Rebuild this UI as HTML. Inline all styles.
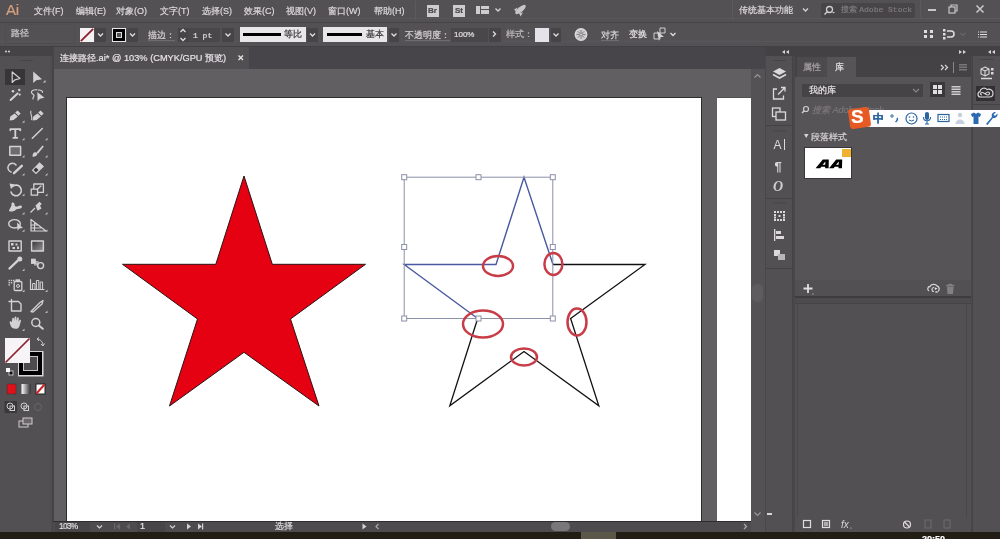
<!DOCTYPE html>
<html><head><meta charset="utf-8">
<style>
*{margin:0;padding:0;box-sizing:border-box}
html,body{width:1000px;height:539px;overflow:hidden;background:#535053;font-family:"Liberation Sans",sans-serif;color:#e6e3e6}
.a{position:absolute}
.t{position:absolute;white-space:nowrap;font-size:9px;line-height:11px;color:#dcd9dc;will-change:transform;-webkit-text-stroke:0.2px currentColor}
svg.i{position:absolute;overflow:visible;will-change:transform}
.dk{position:absolute;background:#474447}
.ul{border-bottom:1px solid #6e6b6e}
</style></head><body>
<!-- ========== MENU BAR ========== -->
<div class="a" style="left:0;top:0;width:1000px;height:22px;background:#545154"></div>
<div class="a" style="left:0;top:18px;width:1000px;height:1px;background:#5a575a"></div>
<div class="a" style="left:0;top:22px;width:1000px;height:1px;background:#464346"></div>
<div class="t" style="left:6px;top:2px;font-size:15px;line-height:15px;color:#cfa486;letter-spacing:-0.2px;text-shadow:0 0 1px #6a4030">Ai</div>
<div class="t" style="left:34px;top:6px">文件(F)</div>
<div class="t" style="left:76px;top:6px">编辑(E)</div>
<div class="t" style="left:116px;top:6px">对象(O)</div>
<div class="t" style="left:160px;top:6px">文字(T)</div>
<div class="t" style="left:202px;top:6px">选择(S)</div>
<div class="t" style="left:244px;top:6px">效果(C)</div>
<div class="t" style="left:286px;top:6px">视图(V)</div>
<div class="t" style="left:328px;top:6px">窗口(W)</div>
<div class="t" style="left:374px;top:6px">帮助(H)</div>
<div class="a" style="left:415px;top:1px;width:1px;height:19px;background:#5e5b5e"></div>
<div class="a" style="left:427px;top:5px;width:12px;height:12px;background:#cfcccf"></div>
<div class="t" style="left:428px;top:5px;font-size:8px;color:#4a474a;font-weight:bold">Br</div>
<div class="a" style="left:453px;top:5px;width:12px;height:12px;background:#cfcccf"></div>
<div class="t" style="left:455px;top:5px;font-size:8px;color:#4a474a;font-weight:bold">St</div>
<div class="a" style="left:476px;top:6px;width:4px;height:8px;background:#cfcccf"></div>
<div class="a" style="left:481px;top:6px;width:8px;height:3px;background:#cfcccf"></div>
<div class="a" style="left:481px;top:10px;width:8px;height:4px;background:#cfcccf"></div>
<svg class="i" style="left:0;top:0" width="1000" height="22">
<path d="M495.5 8.5 L498 11 L500.5 8.5" stroke="#d6d3d6" stroke-width="1.3" fill="none"/>
<g fill="#c8c5c8"><ellipse cx="520.5" cy="9.5" rx="6.5" ry="2.6" transform="rotate(-40 520.5 9.5)"/><path d="M514 9.5 L517.5 7.5 L516 11.5 Z M519 13 L520.5 16.5 L523 12.5 Z"/></g>
<path d="M803 8.5 L805.5 11 L808 8.5" stroke="#d6d3d6" stroke-width="1.3" fill="none"/>
</svg>
<div class="a" style="left:732px;top:1px;width:1px;height:19px;background:#5e5b5e"></div>
<div class="t" style="left:739px;top:5px;width:53px">传统基本功能</div>
<div class="a" style="left:821px;top:3px;width:94px;height:15px;background:#484548;border-radius:2px"></div>
<svg class="i" style="left:0;top:0" width="1000" height="22">
<circle cx="829.5" cy="9.5" r="3" stroke="#d0cdd0" stroke-width="1.3" fill="none"/>
<path d="M827.5 11.5 L824.5 14.5" stroke="#d0cdd0" stroke-width="1.5"/>
<path d="M832 12 L835 12 L833.5 13.5Z" fill="#d0cdd0"/>
<path d="M928 10 H936" stroke="#c8c5c8" stroke-width="2"/>
<rect x="949" y="7" width="6" height="6" stroke="#c8c5c8" stroke-width="1.2" fill="none"/>
<path d="M951 7 V5 H957 V11 H955" stroke="#c8c5c8" stroke-width="1.2" fill="none"/>
<path d="M976.5 5.5 L983.5 12.5 M983.5 5.5 L976.5 12.5" stroke="#c8c5c8" stroke-width="1.6"/>
</svg>
<div class="t" style="left:841px;top:4px;color:#7e7b7e;font-size:8px">搜索 <span style="font-family:'Liberation Mono',monospace;font-size:8px">Adobe Stock</span></div>
<div class="a" style="left:920px;top:0;width:1px;height:18px;background:#5c595c"></div>
<div class="a" style="left:920px;top:18px;width:80px;height:1px;background:#5c595c"></div>

<!-- ========== CONTROL BAR ========== -->
<div class="a" style="left:0;top:23px;width:1000px;height:23px;background:#545154"></div>
<div class="a" style="left:0;top:41px;width:1000px;height:1px;background:#59565a"></div>
<div class="a" style="left:0;top:46px;width:1000px;height:1px;background:#434043"></div>
<div class="a" style="left:5px;top:24px;width:70px;height:20px;border:1px solid #504d50"></div>
<div class="t" style="left:11px;top:28px;color:#cfcccf">路径</div>
<!-- fill swatch -->
<div class="a" style="left:80px;top:28px;width:14px;height:14px;background:#f4f2f4;overflow:hidden"></div>
<svg class="i" style="left:0;top:0" width="1000" height="50">
<path d="M80.8 41.2 L93.2 28.8" stroke="#8c1c2a" stroke-width="1.8"/>
</svg>
<div class="dk" style="left:95px;top:28px;width:11px;height:14px"></div>
<div class="a" style="left:112px;top:28px;width:14px;height:14px;background:#000;border:1px solid #e8e5e8"></div>
<div class="a" style="left:116px;top:32px;width:6px;height:6px;background:#555;border:1px solid #ddd"></div>
<div class="dk" style="left:127px;top:28px;width:11px;height:14px"></div>
<div class="t ul" style="left:148px;top:29px;color:#d6d3d6;line-height:11px;padding-top:1px;height:12px">描边：</div>
<div class="dk" style="left:178px;top:28px;width:10px;height:14px"></div>
<div class="dk" style="left:188px;top:28px;width:32px;height:14px;background:#4a474a"></div>
<div class="t" style="left:193px;top:30px;font-family:'Liberation Mono',monospace;font-size:8px;color:#e0dde0">1 pt</div>
<div class="dk" style="left:222px;top:28px;width:12px;height:14px"></div>
<div class="a" style="left:240px;top:27px;width:66px;height:15px;background:#e9e6e9"></div>
<div class="a" style="left:243px;top:33px;width:38px;height:2.5px;background:#000"></div>
<div class="t" style="left:284px;top:29px;color:#333">等比</div>
<div class="dk" style="left:307px;top:28px;width:11px;height:14px"></div>
<div class="a" style="left:323px;top:27px;width:64px;height:15px;background:#e9e6e9"></div>
<div class="a" style="left:327px;top:33px;width:35px;height:2.5px;background:#000"></div>
<div class="t" style="left:366px;top:29px;color:#333">基本</div>
<div class="dk" style="left:389px;top:28px;width:10px;height:14px"></div>
<div class="t ul" style="left:405px;top:29px;color:#d6d3d6;padding-top:1px;height:12px">不透明度：</div>
<div class="dk" style="left:451px;top:28px;width:37px;height:14px;background:#4a474a"></div>
<div class="t" style="left:454px;top:29px;color:#e0dde0;font-size:8px">100%</div>
<div class="dk" style="left:489px;top:28px;width:12px;height:14px"></div>
<div class="t" style="left:506px;top:29px;color:#bebbbe">样式：</div>
<div class="a" style="left:535px;top:28px;width:14px;height:14px;background:#e6e2ea"></div>
<div class="dk" style="left:551px;top:28px;width:10px;height:14px"></div>
<div class="t ul" style="left:601px;top:29px;color:#d6d3d6;padding-top:1px;height:12px">对齐</div>
<div class="t" style="left:629px;top:29px;color:#e6e3e6">变换</div>
<svg class="i" style="left:0;top:0" width="1000" height="50">
<g stroke="#e0dde0" stroke-width="1.3" fill="none">
<path d="M98 33.5 L100.5 36 L103 33.5"/>
<path d="M130 33.5 L132.5 36 L135 33.5"/>
<path d="M180.5 32 L183 29.5 L185.5 32 M180.5 38 L183 40.5 L185.5 38"/>
<path d="M225.5 33.5 L228 36 L230.5 33.5"/>
<path d="M310 33.5 L312.5 36 L315 33.5"/>
<path d="M391.5 33.5 L394 36 L396.5 33.5"/>
<path d="M493 31.5 L495.5 34 L493 36.5"/>
<path d="M553.5 33.5 L556 36 L558.5 33.5"/>
<path d="M670.5 33 L673 35.5 L675.5 33"/>
<circle cx="581" cy="34.5" r="5.8" fill="#cfcccf" stroke="#dcd9dc"/>
<g stroke="#7a777a" stroke-width=".9"><circle cx="581" cy="34.5" r="1.6"/>
<path d="M581 30 V32.5 M581 36.5 V39 M576.5 34.5 H579 M583 34.5 H585.5 M577.8 31.3 L579.6 33.1 M582.4 35.9 L584.2 37.7 M584.2 31.3 L582.4 33.1 M579.6 35.9 L577.8 37.7"/></g>
</g>
<path d="M654 33 H660 V39 H654Z M660 28 H665 V33 H660Z" stroke="#d0cdd0" stroke-width="1" fill="none"/>
<path d="M657 31 L664 37 L660 37 L659 41Z" fill="#d8d5d8"/>
<g fill="#e0dde0">
<rect x="924" y="30" width="3" height="3"/><rect x="930" y="30" width="3" height="3"/>
<rect x="924" y="35" width="3" height="3"/><rect x="930" y="35" width="3" height="3"/>
<rect x="943" y="29" width="2.5" height="2.5"/><rect x="943" y="33" width="2.5" height="2.5"/><rect x="943" y="37" width="2.5" height="2.5"/>
</g>
<path d="M947 31 H951 A3 3 0 0 1 951 37 H947" stroke="#e0dde0" stroke-width="1.5" fill="none"/>
<path d="M960.5 33 L963 35.5 L965.5 33" stroke="#6a676a" stroke-width="1.2" fill="none"/>
<g stroke="#e0dde0" stroke-width="1"><path d="M980 32 H987 M980 34.5 H987 M980 37 H987"/></g>
<g fill="#e0dde0"><rect x="978" y="31.5" width="1" height="1"/><rect x="978" y="34" width="1" height="1"/><rect x="978" y="36.5" width="1" height="1"/></g>
</svg>
<!-- ========== TOOLBAR ========== -->
<div class="a" style="left:0;top:47px;width:52px;height:485px;background:#535053"></div>
<div class="a" style="left:0;top:47px;width:52px;height:9px;background:#464346"></div>
<div class="a" style="left:50px;top:56px;width:2px;height:476px;background:#504d50"></div>
<div class="a" style="left:5px;top:69px;width:20px;height:16px;background:#383538"></div>
<svg class="i" style="left:0;top:0" width="60" height="540">
<g fill="#d8d5d8"><circle cx="6" cy="51.5" r="1"/><circle cx="9" cy="51.5" r="1"/></g>
<path d="M20 60.5 H33" stroke="#484548" stroke-width="1"/>
<g stroke="#d4d1d4" stroke-width="1.2" fill="none" stroke-linejoin="round" stroke-linecap="round">
<!-- r1 selection (outline) -->
<path d="M12.2 72 L12.2 82.5 L15 79.8 L20 78.5 Z"/>
<!-- r2 magic wand -->
<path d="M10.6 100 L17.6 93.4" stroke-width="2"/>
<!-- r2 lasso -->
<path d="M37 89.8 C33 89.5 31 91 31.5 92.5 C32 94 34 94.5 34 95.5 C34 96.8 32.5 97.5 33 99"/>
<path d="M38.5 90 C41 90.3 43 91 42.5 92.3"/>
<!-- r4 T -->
<path d="M10.3 130.3 V129.2 H20.3 V130.3 M15.3 129.2 V137.8 M13.3 137.8 H17.3" stroke-width="1.8"/>
<!-- r4 line -->
<path d="M32.3 138.2 L42.3 128.5" stroke-width="1.5"/>
<!-- r5 rect -->
<rect x="9.8" y="146.5" width="10.8" height="8.8" stroke-width="1.5" fill="#6e6b6e"/>
<!-- r6 shaper -->
<path d="M16 165 A4.5 4.5 0 1 0 11 172" stroke-width="1.5"/>
<path d="M14 173.2 L21.8 165.8" stroke-width="2.4"/>
<!-- r7 rotate -->
<path d="M12.5 186.5 A5.3 5.3 0 1 1 11 192" stroke-width="1.6"/>
<!-- r7 scale -->
<rect x="33.8" y="184" width="9.6" height="8.4" stroke-width="1.3"/>
<rect x="31.2" y="189.2" width="6.4" height="6" stroke-width="1.3" fill="#535053"/>
<path d="M37 189.5 L41 186" stroke-width="1.2"/>
<!-- r9 shape builder -->
<ellipse cx="14.5" cy="223.8" rx="5.8" ry="4.2" stroke-width="1.4"/>
<!-- r9 perspective -->
<path d="M31 219.5 V231 H46 Z M31 225 H37 M31 228 H42 M34.5 222 V231" stroke-width="1.2"/>
<!-- r10 mesh -->
<rect x="9" y="241" width="12.2" height="10" stroke-width="1.4"/>
<!-- r10 gradient -->
<rect x="31.6" y="241" width="11.8" height="10" stroke-width="1.4" fill="url(#gtool)"/>
<!-- r11 eyedropper -->
<path d="M9.5 268.5 L17.5 260.8" stroke-width="2.4"/>
<!-- r11 blend -->
<circle cx="40.6" cy="265.6" r="3" stroke-width="1.4"/>
<!-- r12 sprayer -->
<rect x="14.2" y="281.5" width="7.6" height="9" rx="1" stroke-width="1.3"/>
<circle cx="18" cy="286" r="1.5" stroke-width="1"/>
<!-- r12 graph -->
<path d="M30.5 279.5 V289.5 H44" stroke-width="1.2"/>
<rect x="33" y="283.5" width="2" height="6" stroke-width="1"/>
<rect x="36.8" y="280.5" width="2" height="9" stroke-width="1"/>
<rect x="40.6" y="282" width="2" height="7.5" stroke-width="1"/>
<!-- r13 artboard -->
<path d="M11.5 299.5 V311 H21 V304 L18.5 301.5 H9" stroke-width="1.4"/>
<!-- r13 slice -->
<path d="M31 311.5 L40 302.5 L43 300.5 L42 304 L33 312 Z" stroke-width="1.3"/>
<!-- r14 zoom -->
<circle cx="35.8" cy="322.5" r="4" stroke-width="1.5"/>
<path d="M38.8 325.5 L42.8 328.8" stroke-width="2"/>
</g>
<defs><linearGradient id="gtool" x1="0" x2="1" y1="0" y2="1"><stop offset="0" stop-color="#333"/><stop offset="1" stop-color="#999"/></linearGradient></defs>
<g fill="#d4d1d4">
<!-- r1 direct selection -->
<path d="M33.2 71.5 L33.2 83 L36.3 80.2 L42 79.2 Z"/>
<path d="M43 82.5 L45.5 82.5 L45.5 80 Z"/>
<!-- wand sparkles -->
<circle cx="13" cy="91.3" r="1.3"/><circle cx="19.3" cy="90" r="1.2"/><circle cx="19.7" cy="94.6" r="1.1"/>
<!-- lasso arrow -->
<path d="M37.3 92 L37.6 101.3 L40 98.8 L44.5 97.8 Z"/>
<!-- pen nibs -->
<path d="M9.6 120.6 L10.3 116.6 L14.6 113.4 L17.8 116.6 L13.6 120 Z"/>
<path d="M15.2 112.6 L17.6 110.4 L20.6 113.4 L18.4 115.8 Z"/>
<path d="M32.6 120.6 L33.3 116.6 L37.6 113.4 L40.8 116.6 L36.6 120 Z"/>
<path d="M38.2 112.6 L40.6 110.4 L43.6 113.4 L41.4 115.8 Z"/>
<path d="M31 110.8 C29.5 113.5 32.8 115.5 31.6 120.2" stroke="#d4d1d4" stroke-width="1.1" fill="none"/>
<!-- brush -->
<path d="M36.5 152.5 L42.5 145.5 L43.8 146.5 L38 153.8 Z"/>
<path d="M32.5 156.8 C32.3 154 34 151.5 36.3 152.5 L37.5 153.8 C37 156 35 157 32.5 156.8Z"/>
<!-- eraser -->
<path d="M31.8 170.2 L39.5 162.2 L44 166.5 L36 174.2 Z"/>
<!-- warp -->
<path d="M9 211 C9.5 208 12 206.5 11.5 204 C11 202.5 13 202 14 203 C15 204 14 206 16 206.5 C18 207 19 205 21 205.5 C22.5 206 22 208 20.5 208.5 C18.5 209 17 208.5 15.5 210 C14 211.5 11 212 9 211 Z"/>
<!-- pin -->
<path d="M35.5 205.5 L39.5 201.8 L41.8 204 L40 205.8 L41.5 208.5 L37.5 210.8 Z"/>
<path d="M30.5 212.5 L35 208" stroke="#d4d1d4" stroke-width="1.3"/>
<!-- shape builder arrow -->
<path d="M17 222.5 L17.5 230.5 L19.5 228.5 L23 228 Z"/>
<!-- mesh pattern -->
<rect x="11" y="243" width="2.5" height="2.5"/><rect x="15.5" y="243.5" width="2" height="2"/><rect x="12.5" y="247" width="2.5" height="2"/><rect x="17" y="246.5" width="2" height="2.5"/>
<!-- eyedropper head -->
<circle cx="19.8" cy="259" r="2.5"/>
<!-- blend squares -->
<rect x="31" y="258.7" width="4.8" height="5.2"/><rect x="34" y="261" width="4.5" height="4.5" opacity=".7"/>
<!-- sprayer dots -->
<rect x="8.5" y="279.8" width="1.4" height="1.4"/><rect x="10.8" y="279.8" width="1.4" height="1.4"/><rect x="13" y="279.8" width="1.4" height="1.4"/>
<rect x="8.5" y="282" width="1.4" height="1.4"/><rect x="10.8" y="282" width="1.4" height="1.4"/><rect x="8.5" y="284.2" width="1.4" height="1.4"/>
<rect x="15.5" y="279.3" width="4.5" height="2.5"/>
<!-- hand -->
<path d="M10.8 326 C10 324 9.5 322.5 9.8 321.5 C10.3 320.8 11.2 321.3 11.8 322.3 L12.3 318.5 C12.5 317.5 13.8 317.5 14 318.5 L14.3 321 L14.6 317.3 C14.8 316.3 16.2 316.3 16.4 317.3 L16.6 321 L17.2 318 C17.5 317 18.8 317.2 18.8 318.2 L18.6 322 L19.6 320 C20.2 319.3 21.2 319.8 21 320.8 L19.5 326 C18.8 328 17.5 328.8 15.5 328.8 C13 328.8 11.8 327.8 10.8 326 Z"/>
</g>
<path d="M9.5 183.5 L15 184.5 L11 189 Z" fill="#d4d1d4"/>
<!-- eraser dark tip -->
<path d="M33.5 170 L36 167.5 L38.5 170 L36 172.5Z" fill="#3a373a"/>
<g fill="#bebbbe">
<path d="M22 122.8 h2.5 v-2.5z M22 140.2 h2.5 v-2.5z M45 140.2 h2.5 v-2.5z M22 157.5 h2.5 v-2.5z M45 157.5 h2.5 v-2.5z M22 175.5 h2.5 v-2.5z M45 175.5 h2.5 v-2.5z M22 196 h2.5 v-2.5z M45 196 h2.5 v-2.5z M22 214.5 h2.5 v-2.5z M45 214.5 h2.5 v-2.5z M22 231.8 h2.5 v-2.5z M45 231.8 h2.5 v-2.5z M22 271 h2.5 v-2.5z M22 292 h2.5 v-2.5z M45 292 h2.5 v-2.5z M45 313 h2.5 v-2.5z M22 331 h2.5 v-2.5z"/>
</g>
<!-- fill/stroke -->
<rect x="18" y="351" width="25.5" height="25.5" fill="#d8d5d8"/>
<rect x="19" y="352" width="23" height="23" fill="#000"/>
<rect x="23.5" y="356.5" width="14" height="14" fill="#4e4b4e" stroke="#c8c5c8" stroke-width="1"/>
<rect x="5" y="338" width="25" height="25" fill="#f6f4f6"/>
<path d="M5.5 362.5 L29.5 338.5" stroke="#8a1f2e" stroke-width="1.7"/>
<path d="M37 339 C40 339 43 342 43 345 M41 344 L43 346 L44.5 343.5 M37 339 L39 337.5 M37 339 L39 341" stroke="#cfcccf" stroke-width="1" fill="none"/>
<rect x="9" y="371" width="4" height="4" fill="#111" stroke="#ddd" stroke-width=".8"/>
<rect x="6" y="368" width="4" height="4" fill="#fff"/>
<!-- color row -->
<rect x="7" y="384" width="9" height="10" fill="#e0101a" stroke="#333" stroke-width=".5"/>
<defs><linearGradient id="gr" x1="0" x2="1"><stop offset="0" stop-color="#fff"/><stop offset="1" stop-color="#333"/></linearGradient></defs>
<rect x="21.5" y="384" width="9" height="10" fill="url(#gr)"/>
<rect x="36" y="384" width="9" height="10" fill="#fff" stroke="#222" stroke-width="1"/>
<path d="M36.5 393.5 L44.5 384.5" stroke="#d0202a" stroke-width="2"/>
<!-- draw modes -->
<rect x="4.5" y="401" width="12.5" height="12" fill="#3b383b"/>
<g stroke="#cfcccf" stroke-width="1" fill="none">
<circle cx="10" cy="406" r="3"/><rect x="10" y="406" width="4.5" height="4.5"/>
<circle cx="24" cy="406" r="3"/><rect x="24" y="406" width="4.5" height="4.5"/>
<circle cx="38" cy="407" r="3.5" stroke="#6a676a"/>
<rect x="19" y="421" width="9" height="6"/><rect x="23" y="418" width="9" height="6" fill="#6a676a"/>
</g>
</svg>

<!-- ========== TAB BAR ========== -->
<div class="a" style="left:52px;top:47px;width:713px;height:22px;background:#48454a"></div>
<div class="a" style="left:54px;top:47px;width:195px;height:22px;background:#524f53"></div>
<div class="t" style="left:60px;top:53px;color:#e6e3e6;font-size:9.25px">连接路径.ai* @ 103% (CMYK/GPU 预览)</div>
<svg class="i" style="left:0;top:0" width="300" height="70">
<path d="M238.5 55.5 L243 60 M243 55.5 L238.5 60" stroke="#e6e3e6" stroke-width="1.4"/>
</svg>
<!-- ========== CANVAS ========== -->
<div class="a" style="left:54px;top:69px;width:697px;height:452px;background:#625f63"></div>
<div class="a" style="left:52px;top:47px;width:2px;height:485px;background:#474448"></div>
<div class="a" style="left:66px;top:97px;width:636px;height:424px;background:#fff;border-left:1px solid #2e2c2e;border-top:1px solid #2e2c2e;border-right:1px solid #2e2c2e"></div>
<div class="a" style="left:717px;top:97px;width:34px;height:424px;background:#fff;border-top:1px solid #505050"></div>
<svg class="i" style="left:0;top:0" width="1000" height="539">
<path d="M244 176 L272.3 264.3 L365.5 264.3 L290.5 319 L319 406 L244 352.3 L169.5 406 L197.5 319 L122.5 264.3 L215.8 264.3 Z" fill="#e50012" stroke="#2a1414" stroke-width="1" stroke-linejoin="miter"/>
<!-- star 2 -->
<path d="M553 264.5 L645 264.5 L570.6 318.5 L598.8 405.8 L524 351.5 L449.8 405.8 L477.7 318.5" fill="none" stroke="#111" stroke-width="1.3"/>
<path d="M477.7 318.5 L404.2 264.5 L496 264.5 L524 177.2 L553 264.5" fill="none" stroke="#4a5aa0" stroke-width="1.4"/>
<g stroke="#8c90a8" stroke-width="1" fill="none">
<rect x="404.2" y="177.2" width="148.6" height="141.3"/>
</g>
<g stroke="#8c90a8" stroke-width="1" fill="#fff">
<rect x="401.7" y="174.7" width="5" height="5"/><rect x="476" y="174.7" width="5" height="5"/><rect x="550.3" y="174.7" width="5" height="5"/>
<rect x="401.7" y="244.5" width="5" height="5"/><rect x="550.3" y="244.5" width="5" height="5"/>
<rect x="401.7" y="316" width="5" height="5"/><rect x="476" y="316" width="5" height="5"/><rect x="550.3" y="316" width="5" height="5"/>
</g>
<g stroke="#c83c48" stroke-width="2.5" fill="none">
<ellipse cx="498" cy="266" rx="15" ry="10"/>
<ellipse cx="553.4" cy="264" rx="9" ry="11"/>
<ellipse cx="483" cy="324" rx="20" ry="13.5"/>
<ellipse cx="577" cy="322" rx="9.5" ry="13.5"/>
<ellipse cx="524" cy="357" rx="13" ry="8.5"/>
</g>
</svg>
<!-- v scrollbar -->
<div class="a" style="left:751px;top:69px;width:14px;height:463px;background:#555255"></div>
<svg class="i" style="left:0;top:0" width="1000" height="539">
<path d="M754.5 77.5 L757.5 74.5 L760.5 77.5" stroke="#9a979a" stroke-width="1.1" fill="none"/>
<path d="M754.5 512.5 L757.5 515.5 L760.5 512.5" stroke="#9a979a" stroke-width="1.1" fill="none"/>
</svg>
<div class="a" style="left:752px;top:284px;width:11px;height:18px;background:#5f5c5f;border-radius:5px"></div>
<!-- status bar -->
<div class="a" style="left:53px;top:521px;width:698px;height:11px;background:#4e4b4e"></div>
<div class="a" style="left:53px;top:521px;width:698px;height:1px;background:#2e2c2e"></div>
<div class="dk" style="left:55px;top:522px;width:35px;height:10px;background:#484548"></div>
<div class="t" style="left:59px;top:521px;font-size:9px;color:#e6e3e6;letter-spacing:-0.6px;transform:scaleX(.9);transform-origin:0 0">103%</div>
<div class="dk" style="left:137px;top:522px;width:28px;height:10px;background:#484548"></div>
<div class="t" style="left:140px;top:521px;font-size:9px;color:#e6e3e6">1</div>
<div class="t" style="left:275px;top:521px;font-size:9px;color:#dcd9dc">选择</div>
<svg class="i" style="left:0;top:0" width="1000" height="539">
<g stroke="#d6d3d6" stroke-width="1.2" fill="none">
<path d="M97 525.5 L99.5 528 L102 525.5"/>
<path d="M170 525.5 L172.5 528 L175 525.5"/>
<path d="M744 524 L746.5 526.5 L744 529" stroke="#aaa"/>
<path d="M378.5 524 L376 526.5 L378.5 529" stroke="#aaa"/>
</g>
<g fill="#d6d3d6">
<path d="M187 523.5 L191 526.5 L187 529.5Z"/>
<path d="M198 523.5 L202 526.5 L198 529.5Z"/><rect x="202" y="523.5" width="1.2" height="6"/>
<path d="M362.5 523.5 L366.5 526.5 L362.5 529.5Z"/>
</g>
<g fill="#6a676a">
<rect x="114" y="523.5" width="1.2" height="6"/><path d="M120 523.5 L116 526.5 L120 529.5Z"/>
<path d="M130 523.5 L126 526.5 L130 529.5Z"/>
</g>
</svg>
<div class="a" style="left:551px;top:522px;width:19px;height:9px;background:#7a777a;border-radius:5px"></div>
<!-- taskbar -->
<div class="a" style="left:0;top:532px;width:1000px;height:7px;background:#221d15"></div>
<div class="a" style="left:581px;top:532px;width:35px;height:7px;background:#5c5849"></div>
<div class="a" style="left:918px;top:532px;width:40px;height:7px;overflow:hidden"><div class="t" style="left:4px;top:3px;font-size:9px;color:#fff;line-height:9px;font-weight:bold">20:50</div></div>
<!-- ========== RIGHT DOCK ========== -->
<div class="a" style="left:765px;top:47px;width:235px;height:485px;background:#4a474a"></div>
<div class="a" style="left:765px;top:47px;width:235px;height:9px;background:#444144"></div>
<!-- icon column -->
<div class="a" style="left:766px;top:56px;width:27px;height:476px;background:#535053;border-right:1px solid #464346"></div>
<div class="a" style="left:766px;top:125px;width:27px;height:1px;background:#454245"></div>
<div class="a" style="left:766px;top:198px;width:27px;height:1px;background:#454245"></div>
<div class="a" style="left:766px;top:268px;width:27px;height:1px;background:#454245"></div>
<!-- main panel -->
<div class="a" style="left:795px;top:56px;width:176px;height:21px;background:#454245"></div>
<div class="a" style="left:797px;top:57px;width:30px;height:20px;background:#4d4a4d"></div>
<div class="a" style="left:827px;top:57px;width:29px;height:20px;background:#575457"></div>
<div class="t" style="left:803px;top:62px;color:#a6a3a6">属性</div>
<div class="t" style="left:835px;top:62px;color:#e6e3e6">库</div>
<div class="a" style="left:795px;top:77px;width:176px;height:203px;background:#575457"></div>
<div class="a" style="left:795px;top:280px;width:176px;height:18px;background:#535053"></div>
<div class="a" style="left:795px;top:296px;width:176px;height:2px;background:#3e3b3e"></div>
<div class="a" style="left:880px;top:298px;width:12px;height:1px;background:#5e5b5e"></div>
<div class="a" style="left:795px;top:298px;width:176px;height:5px;background:#4e4b4e"></div>
<div class="a" style="left:795px;top:303px;width:176px;height:229px;background:#535053;border-top:1px solid #464346"></div>
<div class="a" style="left:797px;top:304px;width:1px;height:213px;background:#4a474a"></div>
<div class="a" style="left:966px;top:304px;width:1px;height:213px;background:#4a474a"></div>
<div class="a" style="left:802px;top:84px;width:121px;height:13px;background:#464346"></div>
<div class="t" style="left:809px;top:85px;color:#e6e3e6">我的库</div>
<div class="a" style="left:930px;top:82px;width:15px;height:15px;background:#3a373a"></div>
<div class="t" style="left:812px;top:105px;color:#7a777a;font-style:italic">搜索 Adobe Stock</div>
<div class="t" style="left:811px;top:132px;color:#d6d3d6">段落样式</div>
<div class="a" style="left:804px;top:147px;width:48px;height:32px;background:#fff;border:1px solid #3a373a"></div>
<svg class="i" style="left:0;top:0" width="1000" height="539"><path fill-rule="evenodd" fill="#000" d="M815.6 168.3 L822.8 159.4 L828.8 159.4 L828.6 168.3 L825.2 168.3 L825.1 166.8 L821.4 166.8 L820.2 168.3 Z M822.6 164.8 L825.2 164.8 L825.4 161.6 Z M829.0 168.3 L836.2 159.4 L842.2 159.4 L842.0 168.3 L838.6 168.3 L838.5 166.8 L834.8 166.8 L833.6 168.3 Z M836.0 164.8 L838.6 164.8 L838.8 161.6 Z"/></svg>
<div class="a" style="left:842px;top:149px;width:9px;height:8px;background:#f0b030"></div>
<svg class="i" style="left:0;top:0" width="1000" height="539">
<g fill="#d8d5d8"><path d="M782 50 L785 52 L782 54Z M786 50 L789 52 L786 54Z" transform="rotate(180 785.5 52)"/></g>
<g fill="#d8d5d8"><path d="M959 50 L962 52 L959 54Z M963 50 L966 52 L963 54Z"/></g>
<g fill="#d8d5d8"><path d="M988 50 L991 52 L988 54Z M992 50 L995 52 L992 54Z" transform="rotate(180 991.5 52)"/></g>
<path d="M773 60.5 H786" stroke="#474447"/>
<path d="M773 131 H786" stroke="#474447"/>
<path d="M773 203 H786" stroke="#474447"/>
<!-- layers -->
<path d="M779.5 68 L786 71.5 L779.5 75 L773 71.5Z" fill="#dcd9dc"/>
<path d="M773 74.5 L779.5 78 L786 74.5" stroke="#dcd9dc" stroke-width="1.6" fill="none"/>
<g stroke="#dcd9dc" stroke-width="1.3" fill="none">
<path d="M777 89 H773.5 V99 H783.5 V95.5"/>
<path d="M778 94.5 L785 87.5 M781 87.5 H785 V91.5"/>
<rect x="772.5" y="108" width="7.5" height="8.5"/>
<rect x="776" y="112" width="9.5" height="8" fill="#535053"/>
<path d="M784.5 139 V150" stroke-width="1"/>
</g>
<text x="773.5" y="148.5" font-size="12" fill="#dcd9dc" font-family="Liberation Sans">A</text>
<text x="774.5" y="170.5" font-size="13" fill="#dcd9dc" font-family="Liberation Sans" font-weight="bold">¶</text>
<text x="773" y="190.5" font-size="14" fill="#cfcccf" font-family="Liberation Serif" font-style="italic" font-weight="bold">O</text>
<g fill="#dcd9dc">
<rect x="774" y="211" width="2" height="2"/><rect x="777" y="211" width="2" height="2"/><rect x="780" y="211" width="2" height="2"/><rect x="783" y="211" width="2" height="2"/>
<rect x="774" y="219" width="2" height="2"/><rect x="777" y="219" width="2" height="2"/><rect x="780" y="219" width="2" height="2"/><rect x="783" y="219" width="2" height="2"/>
<rect x="774" y="214" width="2" height="2"/><rect x="774" y="216.5" width="2" height="2"/><rect x="783" y="214" width="2" height="2"/><rect x="783" y="216.5" width="2" height="2"/>
<rect x="778.5" y="215" width="2" height="2"/>
<rect x="774" y="229" width="1.3" height="12"/><rect x="776" y="231" width="5" height="3"/><rect x="776" y="236" width="8" height="3"/>
<rect x="774" y="250" width="6" height="6"/><rect x="778" y="254" width="7" height="6" fill="#b8b5b8"/>
</g>
<!-- panel tab right controls -->
<path d="M941 65 L943.5 67.5 L941 70 M945 65 L947.5 67.5 L945 70" stroke="#d8d5d8" stroke-width="1.2" fill="none"/>
<path d="M953.5 62 V73" stroke="#8a878a"/>
<g fill="#7a777a"><rect x="959" y="64" width="8" height="1.5"/><rect x="959" y="66.5" width="8" height="1.5"/><rect x="959" y="69" width="8" height="1.5"/></g>
<path d="M913 89 L916 92 L919 89" stroke="#8a878a" stroke-width="1.2" fill="none"/>
<g fill="#e0dde0"><rect x="933" y="85" width="4" height="4"/><rect x="938" y="85" width="4" height="4"/><rect x="933" y="90" width="4" height="4"/><rect x="938" y="90" width="4" height="4"/></g>
<g fill="#cfcccf"><rect x="951.5" y="86" width="9" height="1.5"/><rect x="951.5" y="88.5" width="9" height="1.5"/><rect x="951.5" y="91" width="9" height="1.5"/><rect x="951.5" y="93.5" width="9" height="1.5"/></g>
<circle cx="806" cy="109" r="2.5" stroke="#d0cdd0" stroke-width="1.2" fill="none"/>
<path d="M804.3 110.8 L802 113" stroke="#d0cdd0" stroke-width="1.5"/>
<path d="M804 134 L808.5 134 L806.2 138Z" fill="#d8d5d8"/>
<!-- footer -->
<path d="M808 284 V293 M803.5 288.5 H812.5" stroke="#e0dde0" stroke-width="1.8"/>
<circle cx="813" cy="294" r=".6" fill="#e0dde0"/>
<path d="M929 291 C927 290 927.5 286.5 930 286.5 C931 284 935.5 283.5 937 286 C939.5 286.5 940 290 938 291.5" stroke="#d6d3d6" stroke-width="1.3" fill="none"/><path d="M934 287.5 A2 2 0 1 0 934 291.5" stroke="#d6d3d6" stroke-width="1.1" fill="none"/><path d="M934.5 287.2 L937.5 288.5 L935 290Z" fill="#e6e3e6"/><path d="M935.5 291 L937.5 293 M937.5 291 L935.5 293" stroke="#d6d3d6" stroke-width="1"/>
<g fill="#848184"><rect x="946" y="284.8" width="8.4" height="1.6" rx=".8"/><rect x="948.5" y="283.8" width="3.4" height="1.2"/><path d="M947 287 H953.5 L953 294 H947.5 Z"/></g>
<g stroke="#e0dde0" stroke-width="1.2" fill="none">
<rect x="803.5" y="520.5" width="7" height="7"/>
<rect x="822.5" y="520.5" width="7" height="7"/>
<circle cx="907" cy="524.5" r="3.5"/><path d="M904.5 522 L909.5 527"/>
</g>
<rect x="823.8" y="521.8" width="4.4" height="4.4" fill="#aeabae"/>
<text x="841" y="528" font-size="10" fill="#d8d5d8" font-family="Liberation Sans" font-style="italic">fx</text><circle cx="851" cy="528" r=".6" fill="#d8d5d8"/>
<g stroke="#6e6b6e" stroke-width="1" fill="none"><rect x="925" y="520" width="6" height="8"/><rect x="944" y="520" width="6" height="8"/></g>
<path d="M805 105 H811" stroke="none"/>
</svg>
<!-- right column -->
<div class="a" style="left:972px;top:56px;width:28px;height:476px;background:#535053;border-left:1px solid #464346"></div>
<div class="a" style="left:972px;top:104px;width:28px;height:1px;background:#464346"></div>
<div class="a" style="left:976px;top:86px;width:19px;height:15px;background:#333033"></div>
<svg class="i" style="left:0;top:0" width="1000" height="539">
<path d="M980 59.5 H994" stroke="#474447"/>
<g stroke="#dcd9dc" stroke-width="1.1" fill="none">
<path d="M985 67 L989 69 L989 74 L985 76 L981 74 L981 69 Z M981 69 L985 71 L989 69 M985 71 V76"/>
<path d="M981 78.5 H992" stroke-width="1.5"/>
<path d="M980.5 97 C977.5 97 977 92.5 980 91.5 C980.5 88 985 87 987 89.5 C990 88.5 993.5 90.5 993 93.5 C993 96 991.5 97 989.5 97 Z" stroke-width="1.2"/><path d="M982 95 C980 95 980 92.5 982 92.5 C984 92.5 986 95 988 95 C990 95 990 92 988 92 C986.5 92 985.5 93.5 985 94" stroke-width="1.1"/>
</g>
<g fill="#dcd9dc"><rect x="991" y="68" width="2.5" height="2.5"/><rect x="991" y="72" width="2.5" height="2.5"/></g>
</svg>
<!-- sogou IME bar -->
<div class="a" style="left:864px;top:110px;width:136px;height:17px;background:#fdfdfd"></div>
<div class="a" style="left:849px;top:108px;width:21px;height:20px;background:#e65a24;border-radius:3px;transform:rotate(-8deg)"></div>
<div class="t" style="left:851px;top:106px;font-size:19px;line-height:22px;color:#fff;font-weight:bold">S</div>
<div class="t" style="left:873px;top:112px;font-size:11px;line-height:12px;color:#2a64a0;font-weight:bold">中</div>
<svg class="i" style="left:0;top:0" width="1000" height="539">
<circle cx="892" cy="116" r="1.2" stroke="#2a64a0" fill="none"/>
<path d="M897 118 C898 119 897 121 895.5 122" stroke="#2a64a0" stroke-width="1.5" fill="none"/>
<circle cx="911.5" cy="118.5" r="5.5" stroke="#2a64a0" stroke-width="1.2" fill="none"/>
<circle cx="909.5" cy="117" r=".8" fill="#2a64a0"/><circle cx="913.5" cy="117" r=".8" fill="#2a64a0"/>
<path d="M909 120 Q911.5 122 914 120" stroke="#2a64a0" fill="none"/>
<rect x="925" y="112" width="4" height="8" rx="2" fill="#2a64a0"/>
<path d="M923.5 117 C923.5 122 930.5 122 930.5 117 M927 121 V124 M925 124 H929" stroke="#2a64a0" stroke-width="1.1" fill="none"/>
<rect x="938" y="114.5" width="11" height="7" stroke="#2a64a0" stroke-width="1.2" fill="none"/>
<path d="M940 117 H947 M940 119.5 H947" stroke="#2a64a0" stroke-dasharray="1 1"/>
<circle cx="960" cy="115" r="2.2" fill="#c6cfdd"/><path d="M955.5 124 C955.5 118 964.5 118 964.5 124Z" fill="#c6cfdd"/>
<path d="M971 114 L974 112.5 C975 114 977 114 978 112.5 L981 114 L980 117 L978.5 116.5 V124 H973.5 V116.5 L972 117 Z" fill="#2a6ab0"/>
<path d="M986 124 L992 117 C991 114 993 111.5 996 112 L993.5 114.5 L995 116 L997.5 113.5 C998 116.5 995.5 118.5 993 118 L987.5 125Z" fill="#2a6ab0"/>
</svg>
<div class="a" style="left:767px;top:513px;width:5px;height:2px;background:#d8d5d8"></div>
</body></html>
